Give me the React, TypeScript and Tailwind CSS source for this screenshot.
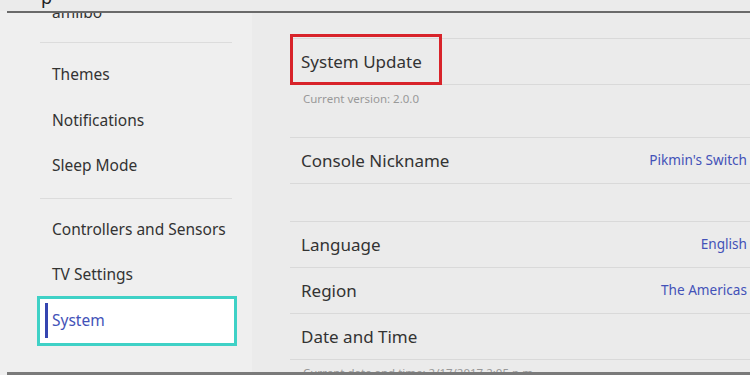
import React from "react";

const font = { fontFamily: '"Noto Sans", "Open Sans", sans-serif' };

function SideItem({ label }: { label: string }) {
  return (
    <div className="h-[45.5px] flex items-center pl-[52px] text-[15.5px] text-[#333333]">
      {label}
    </div>
  );
}

function Row({ label, value }: { label: string; value?: string }) {
  return (
    <div className="h-[46px] flex items-center justify-between border-b border-[#d9d9d9] pl-[11px] pr-[3px]">
      <span className="text-[17px] text-[#333333]">{label}</span>
      {value && <span className="text-[13.6px] text-[#4352b8]">{value}</span>}
    </div>
  );
}

export default function App() {
  return (
    <div
      className="relative w-[750px] h-[375px] overflow-hidden bg-[#ebebeb] flex items-start"
      style={font}
    >
      {/* sidebar */}
      <div className="w-[252px] h-[375px] shrink-0 bg-[#efefef]">
        <div className="h-[35px] -mt-[5px] flex items-center pl-[52px] text-[15.5px] text-[#333333]">
          amiibo
        </div>
        <div className="mt-[12px] ml-[40px] w-[192px] h-px bg-[#dcdcdc]" />
        <div className="mt-[9px]">
          <SideItem label="Themes" />
          <SideItem label="Notifications" />
          <SideItem label="Sleep Mode" />
        </div>
        <div className="mt-[9px] ml-[40px] w-[192px] h-px bg-[#dcdcdc]" />
        <div className="mt-[8px]">
          <SideItem label="Controllers and Sensors" />
          <SideItem label="TV Settings" />
          <div className="mt-[-2px] ml-[37px] w-[200px] h-[50px] border-[3px] border-[#3fd1c6] bg-white flex items-center">
            <div className="ml-[5px] w-[3px] h-[35px] bg-[#3545b0]" />
            <span className="ml-[4px] text-[15.5px] text-[#4352b8]">System</span>
          </div>
        </div>
      </div>

      {/* main */}
      <div className="flex-1 pl-[38px] pt-[38px]">
        <div className="border-t border-[#d9d9d9]">
          <Row label="System Update" />
        </div>
        <div className="h-[52px] pl-[13px] pt-[5px] text-[11.5px] text-[#999999]">
          Current version: 2.0.0
        </div>
        <div className="border-t border-[#d9d9d9]">
          <Row label="Console Nickname" value="Pikmin's Switch" />
        </div>
        <div className="h-[37px]" />
        <div className="border-t border-[#d9d9d9]">
          <Row label="Language" value="English" />
          <Row label="Region" value="The Americas" />
          <Row label="Date and Time" />
        </div>
        <div className="pl-[13px] pt-[4px] text-[11.5px] text-[#999999]">
          Current date and time: 2/17/2017 2:05 p.m.
        </div>
      </div>

      {/* header overlay */}
      <div className="absolute left-0 top-0 w-full h-[11px] bg-[#ebebeb] overflow-hidden">
        <span className="absolute left-[41px] top-[-16px] text-[18px] text-[#222222]">p</span>
      </div>
      <div className="absolute left-[7px] right-0 top-[11px] h-[2px] bg-[#6a6a6a]" />

      {/* red annotation */}
      <div className="absolute left-[290px] top-[34px] w-[152px] h-[51px] border-[3px] border-[#d8232a]" />

      {/* bottom line */}
      <div className="absolute left-[7px] right-0 top-[372px] h-[3px] bg-[#7a7a7a]" />
    </div>
  );
}
